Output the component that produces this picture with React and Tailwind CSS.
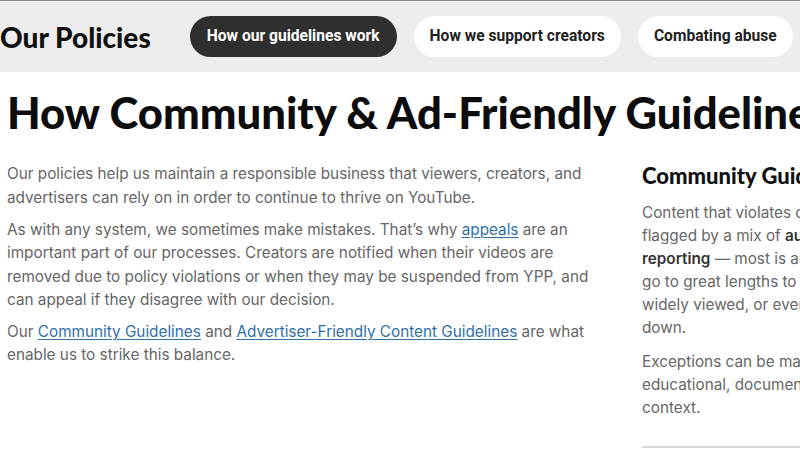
import React from "react";

const body = { fontFamily: "Inter, 'Noto Sans', sans-serif" };
const display = { fontFamily: "Lato, 'Noto Sans', sans-serif" };
const pill = { fontFamily: "Roboto, 'Liberation Sans', sans-serif" };

function Link({ children }) {
  return <a className="text-[#2f6fa8] underline underline-offset-2 decoration-1">{children}</a>;
}

export default function App() {
  return (
    <div className="w-[800px] h-[450px] overflow-hidden bg-white">
      <header className="h-[72px] bg-[#ededed] border-t border-[#8a8a8a] flex items-center whitespace-nowrap">
        <div className="text-[28px] font-black text-[#111] tracking-[0px] mr-[39px]" style={display}>Our Policies</div>
        <div className="flex gap-[17px] shrink-0" style={pill}>
          <div className="h-[41px] px-[17px] rounded-full bg-[#2f2f2f] text-white text-[15.6px] font-bold flex items-center">How our guidelines work</div>
          <div className="h-[41px] px-[16px] rounded-full bg-white text-[#222] text-[15.6px] font-bold flex items-center">How we support creators</div>
          <div className="h-[41px] px-[16px] rounded-full bg-white text-[#222] text-[15.6px] font-bold flex items-center">Combating abuse</div>
        </div>
      </header>
      <main className="pl-[7px] whitespace-nowrap">
        <h1 className="mt-[14px] text-[43.6px] leading-[52px] font-black text-[#0c0c0c] tracking-[0px]" style={display}>
          How Community &amp; Ad-Friendly Guidelines Work
        </h1>
        <div className="flex mt-[24px]">
          <div className="w-[635px] shrink-0 text-[15.3px] leading-[23.5px] text-[#666]" style={body}>
            <p className="mb-[8.5px]">
              Our policies help us maintain a responsible business that viewers, creators, and<br />
              advertisers can rely on in order to continue to thrive on YouTube.
            </p>
            <p className="mb-[8px]">
              As with any system, we sometimes make mistakes. That’s why <Link>appeals</Link> are an<br />
              important part of our processes. Creators are notified when their videos are<br />
              removed due to policy violations or when they may be suspended from YPP, and<br />
              can appeal if they disagree with our decision.
            </p>
            <p>
              Our <Link>Community Guidelines</Link> and <Link>Advertiser-Friendly Content Guidelines</Link> are what<br />
              enable us to strike this balance.
            </p>
          </div>
          <div className="shrink-0 w-[400px]">
            <h2 className="text-[22px] leading-[28px] font-black text-[#111] mb-[11px]" style={display}>
              Community Guidelines
            </h2>
            <div className="text-[15.3px] leading-[23px] text-[#666]" style={body}>
              <p className="mb-[11px]">
                Content that violates our Community Guidelines is<br />
                flagged by a mix of <b className="text-[#333] font-semibold">automated flagging and user</b><br />
                <b className="text-[#333] font-semibold">reporting</b> — most is automatically removed. We<br />
                go to great lengths to remove it before it’s<br />
                widely viewed, or even viewed at all, and take it<br />
                down.
              </p>
              <p>
                Exceptions can be made for content with<br />
                educational, documentary, scientific, or artistic<br />
                context.
              </p>
            </div>
            <div className="mt-[27px] h-[2px] bg-[#d6d6d6]" />
          </div>
        </div>
      </main>
    </div>
  );
}
